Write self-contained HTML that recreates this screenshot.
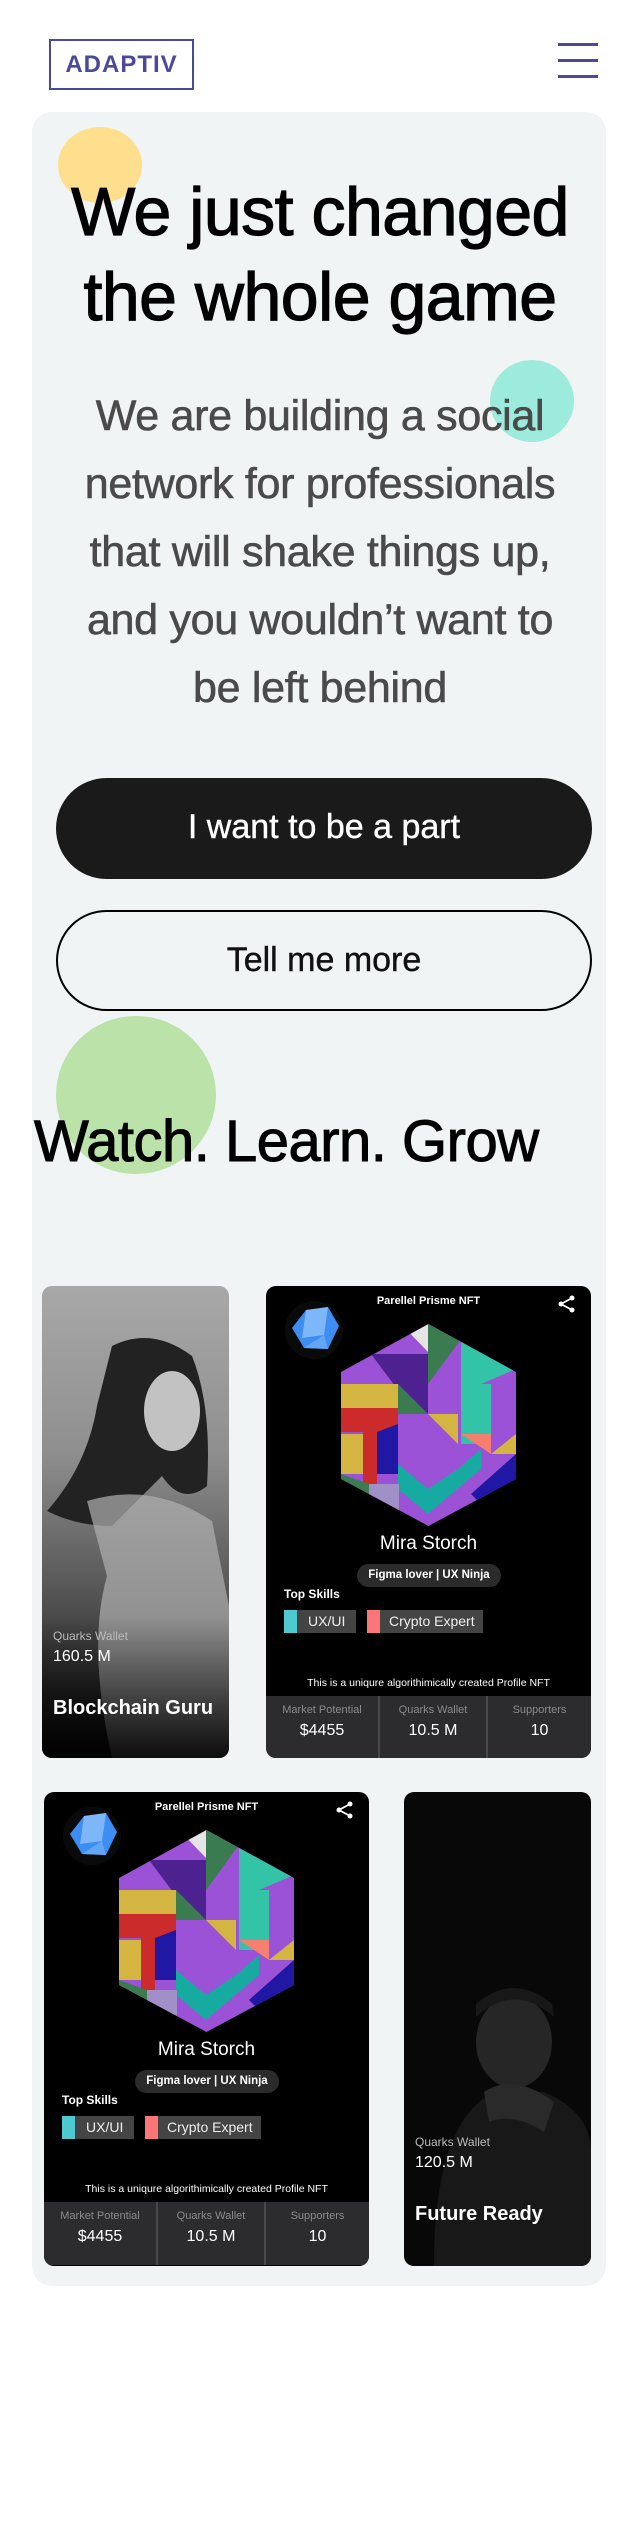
<!DOCTYPE html>
<html><head><meta charset="utf-8">
<style>
*{margin:0;padding:0;box-sizing:border-box}
body{width:640px;height:2526px;background:#fff;font-family:"Liberation Sans",sans-serif;position:relative;overflow:hidden}
.abs{position:absolute}
.logo{left:49px;top:39px;width:145px;height:51px;border:2px solid #4b4a9a;color:#4b4a9a;font-size:24px;font-weight:bold;text-align:center;line-height:47px;letter-spacing:1px}
.hb{left:558px;width:40px;height:3px;background:#4b4a9a}
.panel{left:32px;top:112px;width:574px;height:2174px;background:#f1f4f5;border-radius:20px}
.circ{border-radius:50%}
.h1{left:30px;width:580px;top:170px;text-align:center;font-size:68px;line-height:85px;color:#000;letter-spacing:-0.5px;-webkit-text-stroke:1.2px #000}
.p{left:40px;width:560px;top:382px;text-align:center;font-size:43px;line-height:68px;color:#4a4a4a;letter-spacing:-0.3px;-webkit-text-stroke:0.6px #4a4a4a}
.btn{left:56px;width:536px;height:101px;border-radius:51px;text-align:center;line-height:99px;font-size:34px}
.card{background:#000;border-radius:10px;overflow:hidden;color:#fff}
.nft .t{position:absolute;top:9px;width:100%;text-align:center;font-size:11px;font-weight:bold}
.nft .nm{position:absolute;top:247px;width:100%;text-align:center;font-size:19px}
.nft .pill{position:absolute;left:91px;top:278px;width:144px;height:23px;border-radius:12px;background:#2b2b2b;font-size:11.5px;font-weight:bold;text-align:center;line-height:23px}
.nft .ts{position:absolute;left:18px;top:301px;font-size:12px;font-weight:bold}
.chip{position:absolute;top:324px;height:23px;background:#444;font-size:14px;line-height:23px;color:#eee}
.chip i{position:absolute;left:0;top:0;width:13px;height:23px}
.nft .cap{position:absolute;top:391px;width:100%;text-align:center;font-size:10.5px}
.bar{position:absolute;left:0;top:410px;width:100%;height:63px;background:#2c2c2e;display:flex}
.bar div{text-align:center;padding-top:8px;font-size:11px;color:#8b8b8e;border-right:2px solid #48484a}
.bar div:last-child{border-right:none}
.bar b{display:block;font-weight:normal;color:#fff;font-size:16px;margin-top:6px}
.ph .qw{position:absolute;left:11px;top:343px;font-size:12px;color:#bbb}
.ph .v{position:absolute;left:11px;top:362px;font-size:16px}
.ph .r{position:absolute;left:11px;top:411px;font-size:20px;font-weight:bold}
</style></head><body>
<div class="abs logo">ADAPTIV</div>
<div class="abs hb" style="top:43px"></div>
<div class="abs hb" style="top:59px"></div>
<div class="abs hb" style="top:75px"></div>
<div class="abs panel"></div>
<div class="abs circ" style="left:58px;top:127px;width:84px;height:76px;background:#fedf8d"></div>
<div class="abs circ" style="left:490px;top:360px;width:84px;height:82px;background:#9cebdc"></div>
<div class="abs circ" style="left:56px;top:1016px;width:160px;height:158px;background:#bbe2a9"></div>
<div class="abs h1">We just changed<br>the whole game</div>
<div class="abs p">We are building a social<br>network for professionals<br>that will shake things up,<br>and you wouldn’t want to<br>be left behind</div>
<div class="abs btn" style="top:778px;background:#1a1a1a;color:#fff;-webkit-text-stroke:0.4px #fff">I want to be a part</div>
<div class="abs btn" style="top:910px;border:2px solid #000;color:#111;line-height:97px;-webkit-text-stroke:0.4px #111">Tell me more</div>
<div class="abs" style="left:34px;top:1108px;font-size:58px;color:#000;letter-spacing:-0.5px;-webkit-text-stroke:1px #000">Watch. Learn. Grow</div>

<!-- card 1 -->
<div class="abs card ph" style="left:42px;top:1286px;width:187px;height:472px;background:linear-gradient(#a8a8a8,#8f8f8f 35%,#555 65%,#0c0c0c)">
<svg class="abs" style="left:0;top:0" width="187" height="472" viewBox="0 0 187 472">
<path d="M70 60 Q110 40 150 70 Q170 120 165 200 Q140 220 120 190 L70 240 Q35 240 5 225 Q45 180 55 120 Z" fill="#222"/>
<ellipse cx="130" cy="125" rx="28" ry="40" fill="#c2c2c2"/>
<path d="M45 215 Q110 195 170 235 L187 320 L187 472 L70 472 Q45 360 65 290 Z" fill="#b0b0b0" opacity=".7"/>
<rect x="0" y="330" width="187" height="142" fill="url(#g1)"/>
<defs><linearGradient id="g1" x1="0" y1="0" x2="0" y2="1"><stop offset="0" stop-color="#000" stop-opacity="0"/><stop offset="1" stop-color="#000" stop-opacity=".9"/></linearGradient></defs>
</svg>
<div class="qw">Quarks Wallet</div><div class="v">160.5 M</div><div class="r">Blockchain Guru</div>
</div>

<div class="abs card nft" style="left:266px;top:1286px;width:325px;height:472px">
<div class="t">Parellel Prisme NFT</div>
<svg class="abs" style="left:290px;top:8px" width="22" height="20" viewBox="0 0 22 20"><circle cx="16" cy="4" r="2.5" fill="#fff"/><circle cx="5" cy="10" r="2.5" fill="#fff"/><circle cx="16" cy="16" r="2.5" fill="#fff"/><path d="M16 4 L5 10 L16 16" stroke="#fff" stroke-width="1.8" fill="none"/></svg>
<svg class="abs" style="left:18px;top:14px" width="60" height="60" viewBox="0 0 60 60"><circle cx="30" cy="30" r="29" fill="#0a0a0a"/><polygon points="8,28 22,10 44,7 55,26 44,49 20,48" fill="#3d8df2"/><polygon points="22,10 44,7 40,35 18,38" fill="#8ec0fb" opacity=".8"/><polygon points="20,48 44,49 40,35" fill="#62a6f8"/></svg>
<svg class="abs" style="left:75px;top:38px" width="175" height="202" viewBox="0 0 175 202">
<defs><clipPath id="hx"><polygon points="87.5,0 175,48 175,155 87.5,202 0,155 0,48"/></clipPath></defs>
<g clip-path="url(#hx)">
<rect width="175" height="202" fill="#9b52d6"/>
<polygon points="60,0 87,0 87,28" fill="#e5e5e5"/><polygon points="87,0 120,15 87,60" fill="#3a7b50"/>
<polygon points="120,15 175,45 140,60 120,60" fill="#33c4a8"/><rect x="120" y="60" width="30" height="60" fill="#33c4a8"/>
<polygon points="30,30 87,30 87,90 60,70" fill="#4e2191"/>
<rect x="0" y="60" width="57" height="24" fill="#d5b542"/>
<polygon points="0,84 57,84 57,108 36,108 36,160 22,160 22,108 0,108" fill="#cc2b2b"/>
<polygon points="36,108 57,100 57,150 36,150" fill="#2018a5"/>
<polygon points="57,60 87,90 57,90" fill="#3a7b50"/>
<polygon points="87,90 117,90 117,120" fill="#d5b542"/>
<polygon points="120,110 150,110 150,130" fill="#f5806f"/>
<polygon points="175,110 150,130 175,130" fill="#d5b542"/>
<polygon points="130,170 175,130 175,160 140,180" fill="#2018a5"/>
<polygon points="57,140 87,165 117,145 140,125 140,145 87,190 57,165" fill="#17aaa0"/>
<rect x="28" y="160" width="30" height="30" fill="#a18fc7"/>
<polygon points="0,150 28,160 28,202 0,202" fill="#3a7b50"/>
<polygon points="0,110 22,110 22,150 0,150" fill="#d5b542"/>
</g></svg>
<div class="nm">Mira Storch</div>
<div class="pill">Figma lover | UX Ninja</div>
<div class="ts">Top Skills</div>
<div class="chip" style="left:18px;width:72px"><i style="background:#4fc9d0"></i><span style="margin-left:24px">UX/UI</span></div>
<div class="chip" style="left:101px;width:116px"><i style="background:#fc7677"></i><span style="margin-left:22px">Crypto Expert</span></div>
<div class="cap">This is a uniqure algorithimically created Profile NFT</div>
<div class="bar"><div style="width:114px">Market Potential<b>$4455</b></div><div style="width:108px">Quarks Wallet<b>10.5 M</b></div><div style="flex:1">Supporters<b>10</b></div></div>
</div>

<div class="abs card nft" style="left:44px;top:1792px;width:325px;height:474px">
<div class="t">Parellel Prisme NFT</div>
<svg class="abs" style="left:290px;top:8px" width="22" height="20" viewBox="0 0 22 20"><circle cx="16" cy="4" r="2.5" fill="#fff"/><circle cx="5" cy="10" r="2.5" fill="#fff"/><circle cx="16" cy="16" r="2.5" fill="#fff"/><path d="M16 4 L5 10 L16 16" stroke="#fff" stroke-width="1.8" fill="none"/></svg>
<svg class="abs" style="left:18px;top:14px" width="60" height="60" viewBox="0 0 60 60"><circle cx="30" cy="30" r="29" fill="#0a0a0a"/><polygon points="8,28 22,10 44,7 55,26 44,49 20,48" fill="#3d8df2"/><polygon points="22,10 44,7 40,35 18,38" fill="#8ec0fb" opacity=".8"/><polygon points="20,48 44,49 40,35" fill="#62a6f8"/></svg>
<svg class="abs" style="left:75px;top:38px" width="175" height="202" viewBox="0 0 175 202">
<g clip-path="url(#hx)">
<rect width="175" height="202" fill="#9b52d6"/>
<polygon points="60,0 87,0 87,28" fill="#e5e5e5"/><polygon points="87,0 120,15 87,60" fill="#3a7b50"/>
<polygon points="120,15 175,45 140,60 120,60" fill="#33c4a8"/><rect x="120" y="60" width="30" height="60" fill="#33c4a8"/>
<polygon points="30,30 87,30 87,90 60,70" fill="#4e2191"/>
<rect x="0" y="60" width="57" height="24" fill="#d5b542"/>
<polygon points="0,84 57,84 57,108 36,108 36,160 22,160 22,108 0,108" fill="#cc2b2b"/>
<polygon points="36,108 57,100 57,150 36,150" fill="#2018a5"/>
<polygon points="57,60 87,90 57,90" fill="#3a7b50"/>
<polygon points="87,90 117,90 117,120" fill="#d5b542"/>
<polygon points="120,110 150,110 150,130" fill="#f5806f"/>
<polygon points="175,110 150,130 175,130" fill="#d5b542"/>
<polygon points="130,170 175,130 175,160 140,180" fill="#2018a5"/>
<polygon points="57,140 87,165 117,145 140,125 140,145 87,190 57,165" fill="#17aaa0"/>
<rect x="28" y="160" width="30" height="30" fill="#a18fc7"/>
<polygon points="0,150 28,160 28,202 0,202" fill="#3a7b50"/>
<polygon points="0,110 22,110 22,150 0,150" fill="#d5b542"/>
</g></svg>
<div class="nm">Mira Storch</div>
<div class="pill">Figma lover | UX Ninja</div>
<div class="ts">Top Skills</div>
<div class="chip" style="left:18px;width:72px"><i style="background:#4fc9d0"></i><span style="margin-left:24px">UX/UI</span></div>
<div class="chip" style="left:101px;width:116px"><i style="background:#fc7677"></i><span style="margin-left:22px">Crypto Expert</span></div>
<div class="cap">This is a uniqure algorithimically created Profile NFT</div>
<div class="bar"><div style="width:114px">Market Potential<b>$4455</b></div><div style="width:108px">Quarks Wallet<b>10.5 M</b></div><div style="flex:1">Supporters<b>10</b></div></div>
</div>

<div class="abs card ph" style="left:404px;top:1792px;width:187px;height:474px;background:#080808">
<svg class="abs" style="left:0;top:0" width="187" height="474" viewBox="0 0 187 474">
<ellipse cx="110" cy="250" rx="38" ry="46" fill="#262626"/>
<path d="M72 225 Q110 190 150 225 L148 212 Q110 180 72 212 Z" fill="#181818"/>
<path d="M30 474 Q30 330 90 300 L140 300 Q187 320 187 360 L187 474 Z" fill="#181818"/>
<path d="M80 300 Q110 280 150 310 L140 340 Q110 320 85 330 Z" fill="#2a2a2a"/>
</svg>
<div class="qw">Quarks Wallet</div><div class="v">120.5 M</div><div class="r">Future Ready</div>
</div>
</body></html>
